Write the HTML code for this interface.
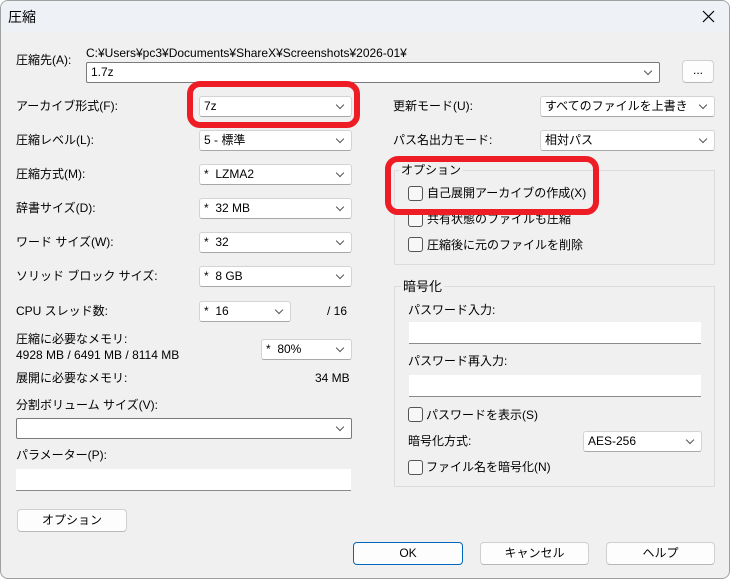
<!DOCTYPE html><html><head><meta charset="utf-8"><style>
*{box-sizing:border-box;margin:0;padding:0}
body{width:730px;height:579px;background:#fff;font-family:"Liberation Sans","Noto Sans CJK JP",sans-serif;font-size:12px;color:#000;overflow:hidden;position:relative}
.win{position:absolute;left:0;top:0;width:730px;height:579px;background:#f0f0f0;border:1px solid #a0a0a0;border-radius:8px;overflow:hidden}
.tb{position:absolute;left:0;top:0;width:730px;height:31px;background:#eef2f7}
.a{position:absolute;white-space:nowrap;line-height:14px}
.cb{position:absolute;height:21px;background:#fff;border:1px solid #d3d3d3;border-bottom-color:#a8a8a8;border-radius:3px;padding-left:4px;line-height:19px;white-space:nowrap}
.cb.ed{border:1px solid #7a7a7a;border-radius:2px}
.cb:after{content:"";position:absolute;right:8px;top:5px;width:5px;height:5px;border-right:1px solid #555;border-bottom:1px solid #555;transform:rotate(45deg)}
.edit{position:absolute;height:22px;background:#fff;border-bottom:1px solid #8a8a8a}
.btn{position:absolute;height:23px;background:#fdfdfd;border:1px solid #d0d0d0;border-bottom-color:#b8b8b8;border-radius:4px;text-align:center;line-height:21px}
.grp{position:absolute;border:1px solid #dcdcdc}
.chk{position:absolute;width:15px;height:15px;border:1px solid #555;border-radius:3px;background:#f7f7f7}
.red{position:absolute;border:6px solid #ee1c25;border-radius:13px}
</style></head><body><div class="win">
<div class="tb"></div>
<div class="a" style="left:7px;top:8px;font-size:14px;line-height:16px">圧縮</div>
<svg style="position:absolute;left:701px;top:9px" width="13" height="13"><path d="M1 1L12 12M12 1L1 12" stroke="#000" stroke-width="1.2"/></svg>

<div class="a" style="left:15px;top:52px">圧縮先(A):</div>
<div class="a" style="left:85px;top:45px">C:¥Users¥pc3¥Documents¥ShareX¥Screenshots¥2026-01¥</div>
<div class="cb ed" style="left:85px;top:61px;width:574px">1.7z</div>
<div class="btn" style="left:681px;top:59px;width:32px;line-height:18px">...</div>

<div class="a" style="left:15px;top:98px">アーカイブ形式(F):</div>
<div class="cb" style="left:198px;top:95px;width:153px">7z</div>
<div class="a" style="left:15px;top:132px">圧縮レベル(L):</div>
<div class="cb" style="left:198px;top:129px;width:153px">5 - 標準</div>
<div class="a" style="left:15px;top:166px">圧縮方式(M):</div>
<div class="cb" style="left:198px;top:163px;width:153px">*&nbsp; LZMA2</div>
<div class="a" style="left:15px;top:200px">辞書サイズ(D):</div>
<div class="cb" style="left:198px;top:197px;width:153px">*&nbsp; 32 MB</div>
<div class="a" style="left:15px;top:234px">ワード サイズ(W):</div>
<div class="cb" style="left:198px;top:231px;width:153px">*&nbsp; 32</div>
<div class="a" style="left:15px;top:268px">ソリッド ブロック サイズ:</div>
<div class="cb" style="left:198px;top:265px;width:153px">*&nbsp; 8 GB</div>
<div class="a" style="left:15px;top:303px">CPU スレッド数:</div>
<div class="cb" style="left:198px;top:300px;width:92px">*&nbsp; 16</div>
<div class="a" style="left:326px;top:303px">/ 16</div>
<div class="a" style="left:15px;top:331px">圧縮に必要なメモリ:</div>
<div class="a" style="left:15px;top:347px">4928 MB / 6491 MB / 8114 MB</div>
<div class="cb" style="left:260px;top:338px;width:91px">*&nbsp; 80%</div>
<div class="a" style="left:15px;top:370px">展開に必要なメモリ:</div>
<div class="a" style="left:314px;top:370px">34 MB</div>
<div class="a" style="left:15px;top:397px">分割ボリューム サイズ(V):</div>
<div class="cb ed" style="left:15px;top:417px;width:336px"></div>
<div class="a" style="left:15px;top:447px">パラメーター(P):</div>
<div class="edit" style="left:15px;top:468px;width:335px"></div>
<div class="btn" style="left:16px;top:508px;width:110px">オプション</div>

<div class="a" style="left:392px;top:98px">更新モード(U):</div>
<div class="cb" style="left:539px;top:95px;width:175px">すべてのファイルを上書き</div>
<div class="a" style="left:392px;top:132px">パス名出力モード:</div>
<div class="cb" style="left:539px;top:129px;width:175px">相対パス</div>

<div class="grp" style="left:393px;top:169px;width:321px;height:95px"></div>
<div class="a" style="left:398px;top:162px;background:#f0f0f0;padding:0 2px">オプション</div>
<div class="chk" style="left:407px;top:185px"></div><div class="a" style="left:426px;top:185px">自己展開アーカイブの作成(X)</div>
<div class="chk" style="left:407px;top:211px"></div><div class="a" style="left:426px;top:211px">共有状態のファイルも圧縮</div>
<div class="chk" style="left:407px;top:236px"></div><div class="a" style="left:426px;top:237px">圧縮後に元のファイルを削除</div>

<div class="grp" style="left:393px;top:285px;width:321px;height:201px"></div>
<div class="a" style="left:400px;top:279px;background:#f0f0f0;padding:0 2px;font-size:13px">暗号化</div>
<div class="a" style="left:407px;top:302px">パスワード入力:</div>
<div class="edit" style="left:408px;top:321px;width:292px"></div>
<div class="a" style="left:407px;top:353px">パスワード再入力:</div>
<div class="edit" style="left:408px;top:374px;width:292px"></div>
<div class="chk" style="left:407px;top:406px"></div><div class="a" style="left:425px;top:407px">パスワードを表示(S)</div>
<div class="a" style="left:407px;top:433px">暗号化方式:</div>
<div class="cb" style="left:582px;top:430px;width:119px">AES-256</div>
<div class="chk" style="left:407px;top:459px"></div><div class="a" style="left:425px;top:459px">ファイル名を暗号化(N)</div>

<div class="btn" style="left:352px;top:541px;width:110px;border-color:#0067c0">OK</div>
<div class="btn" style="left:479px;top:541px;width:109px">キャンセル</div>
<div class="btn" style="left:605px;top:541px;width:109px">ヘルプ</div>

<div class="red" style="left:186px;top:80px;width:173px;height:47px"></div>
<div class="red" style="left:384px;top:155px;width:214px;height:59px"></div>
</div></body></html>
